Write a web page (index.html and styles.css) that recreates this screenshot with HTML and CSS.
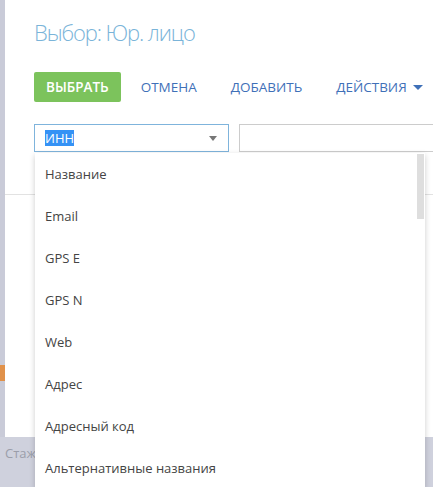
FILE: index.html
```html
<!DOCTYPE html>
<html lang="ru">

<head>
    <meta charset="UTF-8">
    <meta name="viewport" content="width=device-width, initial-scale=1.0">
    <title>Выбор: Юр. лицо</title>
    <link rel="stylesheet" href="styles.css">
</head>

<body>
    <div class="page">
        <div class="page-body">
            <div class="side-strip">
                <span class="side-badge"></span>
            </div>

            <div class="modal">
                <h1 class="modal-title">Выбор: Юр. лицо</h1>

                <div class="toolbar">
                    <button type="button" class="btn btn-primary">Выбрать</button>
                    <button type="button" class="btn btn-link">Отмена</button>
                    <button type="button" class="btn btn-link">Добавить</button>
                    <button type="button" class="btn btn-link">Действия <span class="caret"></span></button>
                </div>

                <div class="filter-row">
                    <div class="combo">
                        <span class="combo-value">ИНН</span>
                        <span class="combo-arrow"></span>

                        <div class="combo-list">
                            <ul>
                                <li>Название</li>
                                <li>Email</li>
                                <li>GPS E</li>
                                <li>GPS N</li>
                                <li>Web</li>
                                <li>Адрес</li>
                                <li>Адресный код</li>
                                <li>Альтернативные названия</li>
                            </ul>
                            <div class="scroll-thumb"></div>
                        </div>
                    </div>
                    <input type="text" class="filter-input">
                </div>

                <div class="grid-head"></div>
            </div>
        </div>

        <div class="page-footer">Стаж</div>
    </div>
</body>

</html>
```

FILE: styles.css
```css
body {
    margin: 0;
    font-family: "Open Sans", Arial, sans-serif;
    overflow: hidden;
    background-color: #cfd1dd;
}

.page {
    width: 433px;
    height: 487px;
    overflow: hidden;
}

.page-body {
    display: flex;
    height: 437px;
}

.side-strip {
    flex-shrink: 0;
    width: 5px;
    background-color: #c9cbd8;
    padding-top: 365px;
    box-sizing: border-box;
}

.side-badge {
    display: block;
    height: 16px;
    background-color: #e0914a;
}

.modal {
    flex: 1;
    min-width: 0;
    background-color: #fff;
    padding: 17px 0 0 29px;
    box-sizing: border-box;
}

.modal-title {
    margin: 0;
    font-size: 22px;
    line-height: 30px;
    font-weight: 300;
    letter-spacing: -1.1px;
    color: #7ab4d9;
}

.toolbar {
    display: flex;
    align-items: center;
    margin-top: 25px;
}

.btn {
    font-family: inherit;
    font-size: 13.5px;
    text-transform: uppercase;
    border: none;
    background: none;
    cursor: pointer;
    height: 30px;
}

.btn-primary {
    padding: 0 12px;
    background-color: #7cc35c;
    color: #fff;
    font-weight: 600;
    border-radius: 2px;
}

.btn-link {
    padding: 0 10px;
    margin-left: 14px;
    color: #3f70b8;
    display: flex;
    align-items: center;
}

.btn-primary + .btn-link {
    margin-left: 10px;
}

.caret {
    display: inline-block;
    margin-left: 6px;
    border-left: 5px solid transparent;
    border-right: 5px solid transparent;
    border-top: 5px solid #3f70b8;
}

.filter-row {
    display: flex;
    gap: 10px;
    margin-top: 22px;
}

.combo {
    position: relative;
    flex-shrink: 0;
    width: 195px;
    height: 28px;
    border: 1px solid #7fb4dc;
    box-sizing: border-box;
    display: flex;
    align-items: center;
    padding-left: 10px;
}

.combo-value {
    font-size: 13px;
    line-height: 16px;
    background-color: #3592f5;
    color: #fff;
}

.combo-arrow {
    margin-left: auto;
    margin-right: 11px;
    border-left: 4.5px solid transparent;
    border-right: 4.5px solid transparent;
    border-top: 5px solid #777;
}

.filter-input {
    width: 230px;
    height: 28px;
    border: 1px solid #ccc;
    box-sizing: border-box;
    flex-shrink: 0;
}

.grid-head {
    margin: 42px 0 0 -29px;
    border-top: 1px solid #e2e2e2;
}

.combo-list {
    position: absolute;
    top: calc(100% + 2px);
    left: 0;
    width: 390px;
    height: 335px;
    overflow: hidden;
    background-color: #fff;
    box-shadow: 0 2px 6px rgba(0, 0, 0, 0.2);
    z-index: 10;
}

.combo-list ul {
    list-style: none;
    margin: 0;
    padding: 0;
}

.combo-list li {
    height: 42px;
    line-height: 42px;
    padding-left: 10px;
    font-size: 13px;
    color: #444;
}

.scroll-thumb {
    position: absolute;
    top: 1px;
    right: 1px;
    width: 7px;
    height: 65px;
    background-color: #dedede;
}

.page-footer {
    padding-left: 5px;
    line-height: 32px;
    font-size: 13px;
    color: #9b9eaa;
}
```
